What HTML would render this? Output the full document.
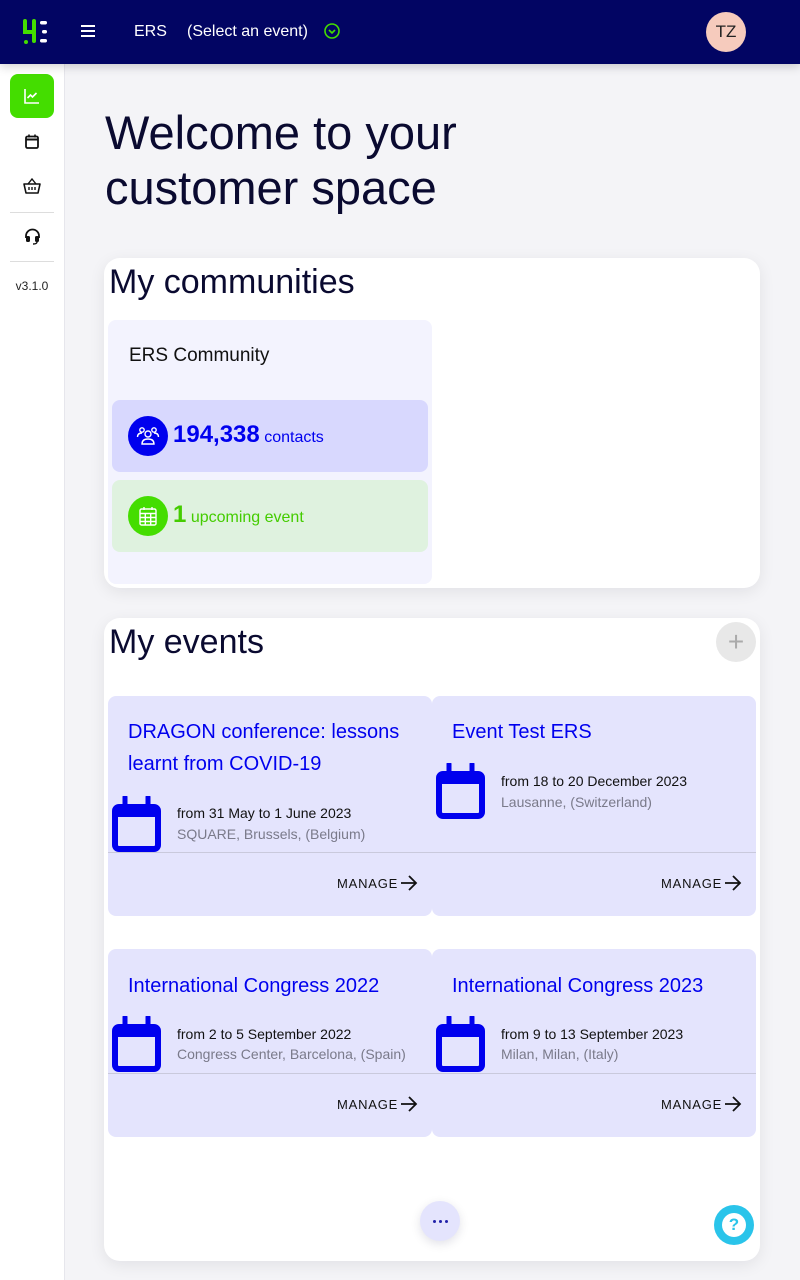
<!DOCTYPE html>
<html><head><meta charset="utf-8"><style>
*{margin:0;padding:0;box-sizing:border-box}
body{width:800px;height:1280px;overflow:hidden;background:#f4f4f7;font-family:"Liberation Sans",Arial,sans-serif;position:relative}
.a{position:absolute}
.hdr{left:0;top:0;width:800px;height:64px;background:#020563;box-shadow:0 2px 10px rgba(0,0,0,.2);z-index:2}
.side{left:0;top:64px;width:65px;height:1216px;background:#fff;border-right:1px solid #e6e6ec}
.card{background:#fff;border-radius:16px;box-shadow:0 4px 16px rgba(0,0,30,.08)}
.ev{background:#e4e4fd;border-radius:8px}
.t{color:#0000ee;font-size:20px;font-weight:500;line-height:32px}
.d{font-size:14px;color:#111;line-height:20px}
.l{font-size:14px;color:#7a7a8a;line-height:20px}
.m{font-size:13px;letter-spacing:.8px;color:#111}
.hr{height:1px;background:#c9c9dc}
</style></head><body>
<div class="a hdr">
 <svg class="a" style="left:22px;top:18px" width="28" height="28" viewBox="0 0 28 28"><path d="M3 3v11h8" stroke="#44dd00" stroke-width="4" fill="none" stroke-linecap="round"/><path d="M12 3v20" stroke="#44dd00" stroke-width="4" stroke-linecap="round"/><circle cx="4" cy="24" r="2" fill="#44dd00"/><rect x="18" y="3" width="7" height="3.5" rx="1.7" fill="#fff"/><rect x="20" y="12" width="5" height="3.5" rx="1.7" fill="#fff"/><rect x="18" y="21" width="7" height="3.5" rx="1.7" fill="#fff"/></svg>
 <div class="a" style="left:81px;top:25px;width:14px;height:2px;background:#fff;box-shadow:0 5px 0 #fff,0 10px 0 #fff"></div>
 <div class="a" style="left:134px;top:23px;color:#fff;font-size:16px">ERS</div>
 <div class="a" style="left:187px;top:23px;color:#fff;font-size:16px">(Select an event)</div>
 <svg class="a" style="left:323px;top:22px" width="18" height="18" viewBox="0 0 18 18"><circle cx="9" cy="9" r="7" stroke="#44dd00" stroke-width="1.6" fill="none"/><path d="M6 8l3 3 3-3" stroke="#44dd00" stroke-width="1.6" fill="none"/></svg>
 <div class="a" style="left:706px;top:12px;width:40px;height:40px;border-radius:50%;background:#f6cbbd;color:#222;font-size:17px;text-align:center;line-height:40px">TZ</div>
</div>
<div class="a side">
 <div class="a" style="left:10px;top:10px;width:44px;height:44px;border-radius:8px;background:#44dd00"></div>
 <svg class="a" style="left:24px;top:24px" width="16" height="16" viewBox="0 0 16 16"><path d="M1 1v14h14" stroke="#fff" stroke-width="1.6" fill="none"/><path d="M3.5 10l3-3 2 2 4-4" stroke="#fff" stroke-width="1.6" fill="none"/></svg>
 <svg class="a" style="left:25px;top:70px" width="14" height="15" viewBox="0 0 14 15"><rect x="1" y="2.5" width="12" height="11.5" rx="1.5" stroke="#111" stroke-width="1.8" fill="none"/><path d="M1 5.5h12" stroke="#111" stroke-width="2"/><path d="M4 0.5v3M10 0.5v3" stroke="#111" stroke-width="1.6"/></svg>
 <svg class="a" style="left:23px;top:114px" width="18" height="16" viewBox="0 0 18 16"><path d="M1 6h16l-2 9H3z" stroke="#111" stroke-width="1.6" fill="none" stroke-linejoin="round"/><path d="M5 6l4-5 4 5M6 9v3M9 9v3M12 9v3" stroke="#111" stroke-width="1.4" fill="none"/></svg>
 <div class="a" style="left:10px;top:148px;width:44px;height:1px;background:#ddd"></div>
 <svg class="a" style="left:24px;top:164px" width="17" height="17" viewBox="0 0 17 17"><path d="M2 10V8a6.5 6.5 0 0113 0v2" stroke="#111" stroke-width="1.8" fill="none"/><rect x="2" y="8" width="4" height="6" rx="1.5" fill="#111"/><rect x="11" y="8" width="4" height="6" rx="1.5" fill="#111"/><path d="M13 14q0 2-4 2" stroke="#111" stroke-width="1.4" fill="none"/></svg>
 <div class="a" style="left:10px;top:197px;width:44px;height:1px;background:#ddd"></div>
 <div class="a" style="left:0;top:215px;width:64px;text-align:center;font-size:12px;color:#222">v3.1.0</div>
</div>
<div class="a" style="left:105px;top:106px;font-size:47px;font-weight:300;color:#0a0a30;line-height:54px">Welcome to your</div>
<div class="a" style="left:105px;top:161px;font-size:47px;color:#0a0a30;line-height:54px">customer space</div>

<div class="a card" style="left:104px;top:258px;width:656px;height:330px">
 <div class="a" style="left:5px;top:5px;font-size:34px;font-weight:300;color:#0a0a30">My communities</div>
 <div class="a" style="left:4px;top:62px;width:324px;height:264px;background:#f3f3fe;border-radius:8px">
  <div class="a" style="left:21px;top:25px;font-size:19px;font-weight:500;color:#111">ERS Community</div>
  <div class="a" style="left:4px;top:80px;width:316px;height:72px;background:#d8d8fe;border-radius:8px">
   <div class="a" style="left:16px;top:16px;width:40px;height:40px;border-radius:50%;background:#0000ee"></div>
   <svg class="a" style="left:24px;top:24px" width="24" height="24" viewBox="0 0 24 24" fill="none" stroke="#fff" stroke-width="1.4"><circle cx="12" cy="10" r="3"/><path d="M6 20c0-4 3-5 6-5s6 1 6 5z"/><circle cx="6" cy="6" r="2.2"/><circle cx="18" cy="6" r="2.2"/><path d="M1.5 13c0-3 2-4 4.5-4M22.5 13c0-3-2-4-4.5-4"/></svg>
   <div class="a" style="left:61px;top:21px;color:#0000ee"><span style="font-size:24px;font-weight:700">194,338</span> <span style="font-size:16px">contacts</span></div>
  </div>
  <div class="a" style="left:4px;top:160px;width:316px;height:72px;background:#dff2df;border-radius:8px">
   <div class="a" style="left:16px;top:16px;width:40px;height:40px;border-radius:50%;background:#44dd00"></div>
   <svg class="a" style="left:27px;top:26px" width="18" height="20" viewBox="0 0 18 20" fill="none" stroke="#fff" stroke-width="1.4"><rect x="1" y="3" width="16" height="16" rx="1.5"/><path d="M1 7.5h16M1 11.5h16M1 15.5h16M6.3 7.5v12M11.7 7.5v12M5 1v3M13 1v3"/></svg>
   <div class="a" style="left:61px;top:21px;color:#44cc00"><span style="font-size:24px;font-weight:700">1</span> <span style="font-size:16px">upcoming event</span></div>
  </div>
 </div>
</div>

<div class="a card" style="left:104px;top:618px;width:656px;height:643px">
 <div class="a" style="left:5px;top:5px;font-size:34px;font-weight:300;color:#0a0a30">My events</div>
 <div class="a" style="left:612px;top:4px;width:40px;height:40px;border-radius:50%;background:#e8e8e8;color:#aaa;font-size:28px;font-weight:300;text-align:center;line-height:40px">+</div>
</div>

<svg width="0" height="0" style="position:absolute"><defs><symbol id="cal" viewBox="0 0 49 56"><rect x="3" y="11" width="43" height="42" rx="4" fill="none" stroke="#0000ee" stroke-width="6"/><rect x="3" y="11" width="43" height="10" rx="3" fill="#0000ee"/><path d="M13 1v12M36 1v12" stroke="#0000ee" stroke-width="5" stroke-linecap="round"/></symbol><symbol id="arr" viewBox="0 0 18 16"><path d="M1 8h15M9 1l7 7-7 7" stroke="#111" stroke-width="1.8" fill="none"/></symbol></defs></svg>

<div class="a ev" style="left:108px;top:696px;width:324px;height:220px">
 <div class="a t" style="left:20px;top:20px;width:290px">DRAGON conference: lessons learnt from COVID-19</div>
 <svg class="a" style="left:4px;top:100px" width="49" height="56"><use href="#cal"/></svg>
 <div class="a d" style="left:69px;top:107px">from 31 May to 1 June 2023</div>
 <div class="a l" style="left:69px;top:128px">SQUARE, Brussels, (Belgium)</div>
 <div class="a hr" style="left:0;top:156px;width:324px"></div>
 <div class="a m" style="left:229px;top:180px">MANAGE</div>
 <svg class="a" style="left:292px;top:179px" width="18" height="16"><use href="#arr"/></svg>
</div>
<div class="a ev" style="left:432px;top:696px;width:324px;height:220px">
 <div class="a t" style="left:20px;top:20px">Event Test ERS</div>
 <svg class="a" style="left:4px;top:67px" width="49" height="56"><use href="#cal"/></svg>
 <div class="a d" style="left:69px;top:75px">from 18 to 20 December 2023</div>
 <div class="a l" style="left:69px;top:96px">Lausanne, (Switzerland)</div>
 <div class="a hr" style="left:0;top:156px;width:324px"></div>
 <div class="a m" style="left:229px;top:180px">MANAGE</div>
 <svg class="a" style="left:292px;top:179px" width="18" height="16"><use href="#arr"/></svg>
</div>
<div class="a ev" style="left:108px;top:949px;width:324px;height:188px">
 <div class="a t" style="left:20px;top:21px">International Congress 2022</div>
 <svg class="a" style="left:4px;top:67px" width="49" height="56"><use href="#cal"/></svg>
 <div class="a d" style="left:69px;top:75px">from 2 to 5 September 2022</div>
 <div class="a l" style="left:69px;top:95px">Congress Center, Barcelona, (Spain)</div>
 <div class="a hr" style="left:0;top:124px;width:324px"></div>
 <div class="a m" style="left:229px;top:148px">MANAGE</div>
 <svg class="a" style="left:292px;top:147px" width="18" height="16"><use href="#arr"/></svg>
</div>
<div class="a ev" style="left:432px;top:949px;width:324px;height:188px">
 <div class="a t" style="left:20px;top:21px">International Congress 2023</div>
 <svg class="a" style="left:4px;top:67px" width="49" height="56"><use href="#cal"/></svg>
 <div class="a d" style="left:69px;top:75px">from 9 to 13 September 2023</div>
 <div class="a l" style="left:69px;top:95px">Milan, Milan, (Italy)</div>
 <div class="a hr" style="left:0;top:124px;width:324px"></div>
 <div class="a m" style="left:229px;top:148px">MANAGE</div>
 <svg class="a" style="left:292px;top:147px" width="18" height="16"><use href="#arr"/></svg>
</div>

<div class="a" style="left:420px;top:1201px;width:40px;height:40px;border-radius:50%;background:#e4e4fd;box-shadow:0 3px 10px rgba(0,0,60,.12)"></div>
<div class="a" style="left:433px;top:1220px;width:3px;height:3px;border-radius:50%;background:#2222aa;box-shadow:6px 0 0 #2222aa,12px 0 0 #2222aa"></div>
<div class="a" style="left:714px;top:1205px;width:40px;height:40px;border-radius:50%;background:#2ac4ea"></div>
<div class="a" style="left:722px;top:1213px;width:24px;height:24px;border-radius:50%;background:#fff;color:#2ac4ea;font-size:17px;font-weight:700;text-align:center;line-height:24px">?</div>
</body></html>
